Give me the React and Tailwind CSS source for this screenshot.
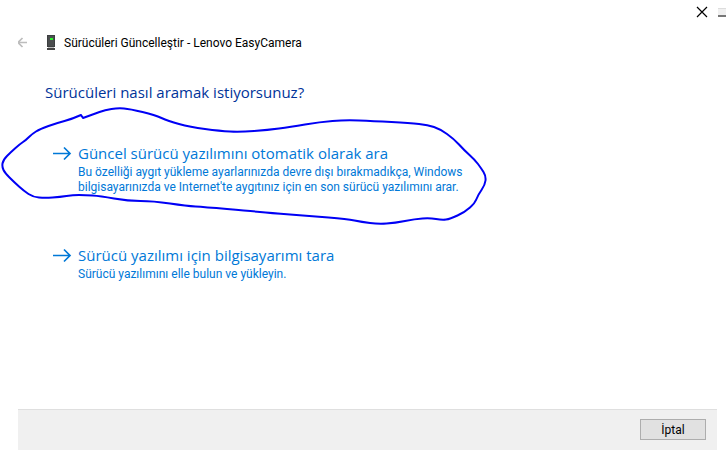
import React from 'react';

// Freehand loop drawn around the recommended option
const LOOP_POINTS = [
    [81, 115], [72, 119], [57, 123], [40, 129], [32, 134], [26, 140], [20, 144], [11, 152], [3, 160], [2, 167],
    [5, 173], [14, 182], [24, 191], [33, 197], [45, 198], [60, 197], [73, 195], [85, 195],
    [100, 196], [128, 201], [153, 201], [187, 206], [204, 207], [250, 211], [270, 213], [310, 216],
    [347, 219], [362, 222], [378, 224], [395, 223], [415, 219], [430, 218], [442, 220], [450, 219],
    [465, 212], [475, 203], [478, 195], [485, 185], [486, 176], [481, 168], [475, 160], [464, 150],
    [454, 139], [440, 129], [428, 125], [410, 123], [373, 121], [345, 120], [320, 122], [290, 127],
    [268, 130], [240, 132], [220, 131], [190, 127], [168, 121], [155, 115], [130, 109], [118, 108],
    [105, 110], [94, 114], [83, 118]
];

const toPath = (points) => {
    let d = `M${points[0][0]} ${points[0][1]}`;
    for (let i = 1; i < points.length - 1; i++) {
        const [x, y] = points[i];
        const [nx, ny] = points[i + 1];
        d += ` Q${x} ${y} ${(x + nx) / 2} ${(y + ny) / 2}`;
    }
    const last = points[points.length - 1];
    return `${d} L${last[0]} ${last[1]} L81 115`;
};

const ArrowIcon = () => (
    <svg className="h-4 w-5 shrink-0" viewBox="0 0 20 16" fill="none" stroke="currentColor" strokeWidth="1.7" aria-hidden="true">
        <path d="M1 8.5h17M12 2.5l6 6-6 6" />
    </svg>
);

const DeviceIcon = () => (
    <svg className="h-4 w-3 shrink-0" viewBox="0 0 12 16" shapeRendering="crispEdges" aria-hidden="true">
        <path d="M2 0h8v12H2z" fill="#3c3f40" />
        <path d="M3 1h6v10H3z" fill="#4a4d4e" />
        <path d="M5 3h3v2H5z" fill="#2ff52f" />
        <path d="M3 12h6v1H3z" fill="#bbb" />
        <path d="M2 13h8v2H2z" fill="#444" />
    </svg>
);

const CommandLink = ({ title, children }) => (
    <button type="button" className="flex items-start gap-1.5 text-left text-[#0078d7]">
        <span className="flex h-5 items-center">
            <ArrowIcon />
        </span>
        <span className="block">
            <span className="block text-[15px] leading-5">{title}</span>
            <span className="mt-0.5 block font-[Roboto,sans-serif] text-xs leading-[15px]">{children}</span>
        </span>
    </button>
);

const App = () => {
    return (
        <div className="relative flex min-h-screen flex-col bg-white pb-1.5 font-['Open_Sans','Noto_Sans',sans-serif]">
            <div className="flex h-6 items-center justify-end gap-2.5">
                <button type="button" aria-label="Kapat" className="text-black">
                    <svg className="h-3 w-3" viewBox="0 0 12 12" fill="none" stroke="currentColor" strokeWidth="1.2">
                        <path d="M1 1l10 10M11 1L1 11" />
                    </svg>
                </button>
                <span className="h-[9px] w-2 border-t border-b-2 border-t-[#ddd] border-b-[#777] bg-[#f0f0f0]" />
            </div>

            <header className="mt-[9px] flex h-5 items-center pl-[18px]">
                <button type="button" aria-label="Geri" disabled className="text-[#bdbdbd]">
                    <svg className="h-3 w-[9px]" viewBox="0 0 9 12" fill="none" stroke="currentColor" strokeWidth="1.7">
                        <path d="M9 5.5H0M4.5 1L0 5.5 4.5 10" />
                    </svg>
                </button>
                <span className="ml-[18px] flex items-center gap-[7px]">
                    <DeviceIcon />
                    <span className="font-[Roboto,sans-serif] text-xs leading-5 text-black">Sürücüleri Güncelleştir - Lenovo EasyCamera</span>
                </span>
            </header>

            <main className="flex-1 px-[45px] pt-[29px]">
                <h1 className="text-[15px] leading-5 text-[#003399]">Sürücüleri nasıl aramak istiyorsunuz?</h1>
                <div className="mt-[41px] flex flex-col items-start gap-[50px] pl-[7px]">
                    <CommandLink title="Güncel sürücü yazılımını otomatik olarak ara">
                        Bu özelliği aygıt yükleme ayarlarınızda devre dışı bırakmadıkça, Windows
                        <br />
                        bilgisayarınızda ve Internet'te aygıtınız için en son sürücü yazılımını arar.
                    </CommandLink>
                    <CommandLink title="Sürücü yazılımı için bilgisayarımı tara">
                        Sürücü yazılımını elle bulun ve yükleyin.
                    </CommandLink>
                </div>
            </main>

            <footer className="mr-[9px] ml-[18px] flex justify-end border-t border-[#dfdfdf] bg-[#f0f0f0] px-[11px] pt-[9px] pb-2.5">
                <button type="button" className="h-[21px] w-[66px] border border-[#adadad] bg-[#e1e1e1] font-[Roboto,sans-serif] text-xs leading-4 text-black">
                    İptal
                </button>
            </footer>

            <svg className="pointer-events-none absolute top-0 left-0 h-[230px] w-[490px]" viewBox="0 0 490 230" fill="none" stroke="#0000f5" strokeWidth="2" strokeLinecap="round" strokeLinejoin="round" aria-hidden="true">
                <path d={toPath(LOOP_POINTS)} />
            </svg>
        </div>
    );
};

export default App;
